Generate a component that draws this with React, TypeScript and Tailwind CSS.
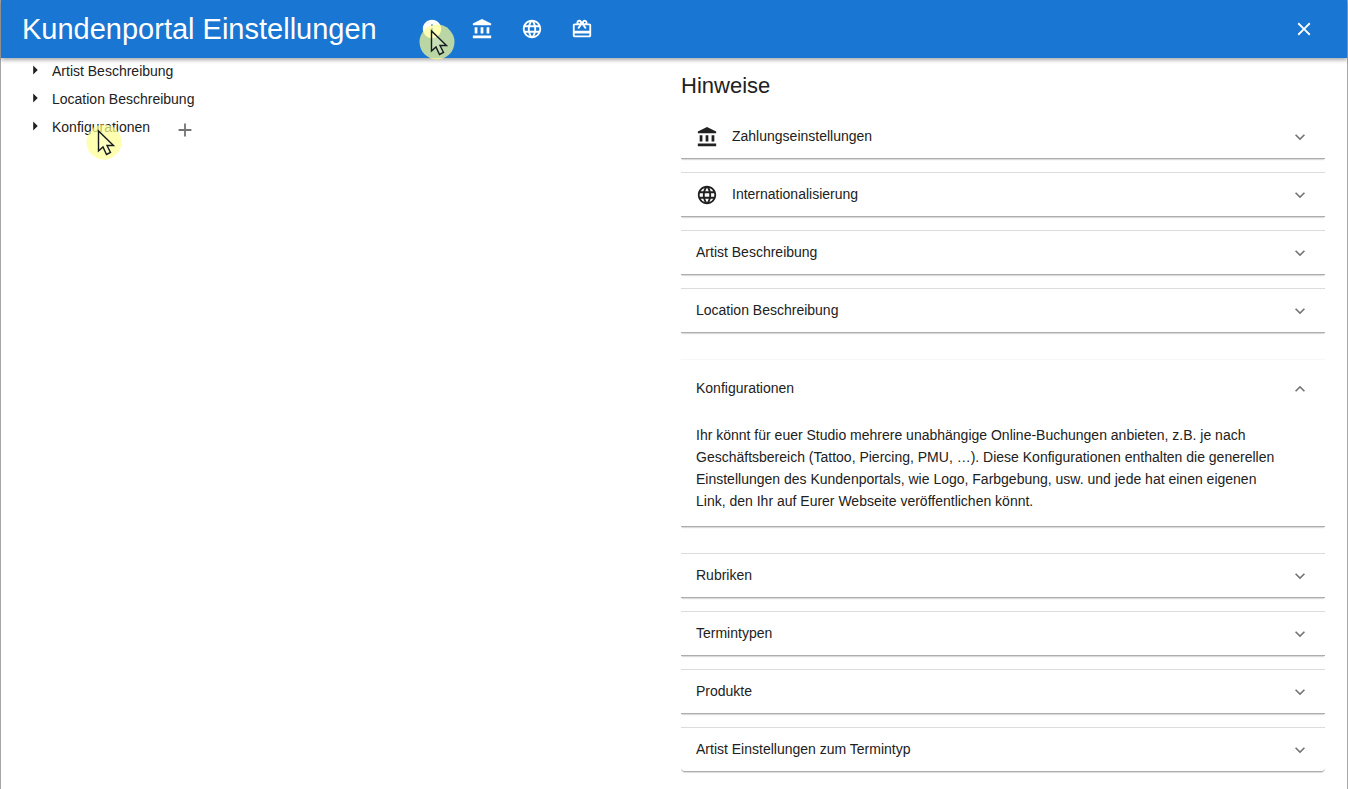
import React, { useState } from 'react';
import {
  MdAccountBalance,
  MdAdd,
  MdArrowRight,
  MdClose,
  MdExpandLess,
  MdExpandMore,
  MdInfo,
  MdLanguage,
  MdRedeem,
} from 'react-icons/md';

const TOOLBAR = [
  { id: 'info', label: 'Hinweise', Icon: MdInfo },
  { id: 'payment', label: 'Zahlungseinstellungen', Icon: MdAccountBalance },
  { id: 'i18n', label: 'Internationalisierung', Icon: MdLanguage },
  { id: 'voucher', label: 'Gutscheine', Icon: MdRedeem },
];

const TREE = [
  { id: 'artist', label: 'Artist Beschreibung', canAdd: false },
  { id: 'location', label: 'Location Beschreibung', canAdd: false },
  { id: 'config', label: 'Konfigurationen', canAdd: true },
];

const HINTS = [
  { id: 'payment', title: 'Zahlungseinstellungen', Icon: MdAccountBalance },
  { id: 'i18n', title: 'Internationalisierung', Icon: MdLanguage },
  { id: 'artist', title: 'Artist Beschreibung' },
  { id: 'location', title: 'Location Beschreibung' },
  {
    id: 'config',
    title: 'Konfigurationen',
    text: 'Ihr könnt für euer Studio mehrere unabhängige Online-Buchungen anbieten, z.B. je nach Geschäftsbereich (Tattoo, Piercing, PMU, …). Diese Konfigurationen enthalten die generellen Einstellungen des Kundenportals, wie Logo, Farbgebung, usw. und jede hat einen eigenen Link, den Ihr auf Eurer Webseite veröffentlichen könnt.',
  },
  { id: 'rubrics', title: 'Rubriken' },
  { id: 'types', title: 'Termintypen' },
  { id: 'products', title: 'Produkte' },
  { id: 'artistTypes', title: 'Artist Einstellungen zum Termintyp' },
];

// Mouse pointer with a yellow highlight behind it
function Pointer({ className }: { className: string }) {
  return (
    <svg className={`absolute pointer-events-none ${className}`} width="36" height="36" viewBox="0 0 36 36" aria-hidden="true">
      <circle cx="18" cy="18" r="17.5" fill="#ffff90" fillOpacity="0.7" />
      <path
        d="M12.5 7v20l4.500-4 3.500 7.500 4-2-3.500-7h6.500z"
        fill="#fff"
        fillOpacity="0.2"
        stroke="#151a20"
        strokeWidth="1.400"
      />
    </svg>
  );
}

export default function App() {
  const [open, setOpen] = useState<string | null>('config');

  return (
    <div className="relative min-h-screen bg-white border-x border-[#a6a6a6] font-['Liberation_Sans',Arial,sans-serif] text-sm text-[#212121]">
      <header className="h-[58px] bg-[#1976d2] text-white flex items-center pl-[21px] pr-8 shadow-[0_2px_4px_rgba(0,0,0,0.35)]">
        <h1 className="text-[29px] pt-0.5">Kundenportal Einstellungen</h1>
        <nav className="flex items-center gap-7 ml-11">
          {TOOLBAR.map(({ id, label, Icon }) => (
            <button key={id} type="button" aria-label={label}>
              <Icon size={22} />
            </button>
          ))}
        </nav>
        <button type="button" aria-label="Schließen" className="ml-auto">
          <MdClose size={22} />
        </button>
      </header>

      <main className="grid grid-cols-2 gap-[14px] px-[22px]">
        {/* Navigation tree */}
        <ul>
          {TREE.map(item => (
            <li key={item.id} className="flex items-center h-7">
              <button type="button" className="flex items-center gap-1.5 pl-px">
                <MdArrowRight size={22} className="mb-1" />
                <span className="pb-0.5">{item.label}</span>
              </button>
              {item.canAdd && (
                <button type="button" aria-label="Hinzufügen" className="ml-6 mt-1 text-[#757575]">
                  <MdAdd size={22} />
                </button>
              )}
            </li>
          ))}
        </ul>

        {/* Hints */}
        <section>
          <h2 className="text-[22px] leading-8 pt-3 mb-3">Hinweise</h2>
          <div className="flex flex-col gap-[13px]">
            {HINTS.map(({ id, title, text, Icon }) => {
              const expanded = open === id;
              return (
                <div
                  key={id}
                  className={`border-t border-b border-b-[#adadad] shadow-[0_2px_1px_-1px_rgba(0,0,0,0.14)] first:border-t-transparent last:rounded-b ${
                    expanded ? 'my-[13px] border-t-[#f7f7f7]' : 'border-t-[#dcdcdc]'
                  }`}
                >
                  <button
                    type="button"
                    aria-expanded={expanded}
                    onClick={() => setOpen(expanded ? null : id)}
                    className={`w-full flex items-center px-[15px] text-left ${expanded ? 'h-[58px]' : 'h-[43px]'}`}
                  >
                    {Icon && <Icon size={22} className="mr-[14px]" />}
                    <span className="flex-1 pb-0.5">{title}</span>
                    {expanded ? (
                      <MdExpandLess size={20} className="text-[#757575]" />
                    ) : (
                      <MdExpandMore size={20} className="text-[#757575]" />
                    )}
                  </button>
                  {expanded && text && (
                    <p className="pl-[15px] pr-11 pt-1.5 pb-[14px] leading-[22px]">{text}</p>
                  )}
                </div>
              );
            })}
          </div>
        </section>
      </main>

      <Pointer className="left-[418px] top-[24px]" />
      <Pointer className="left-[85px] top-[124px]" />
    </div>
  );
}
